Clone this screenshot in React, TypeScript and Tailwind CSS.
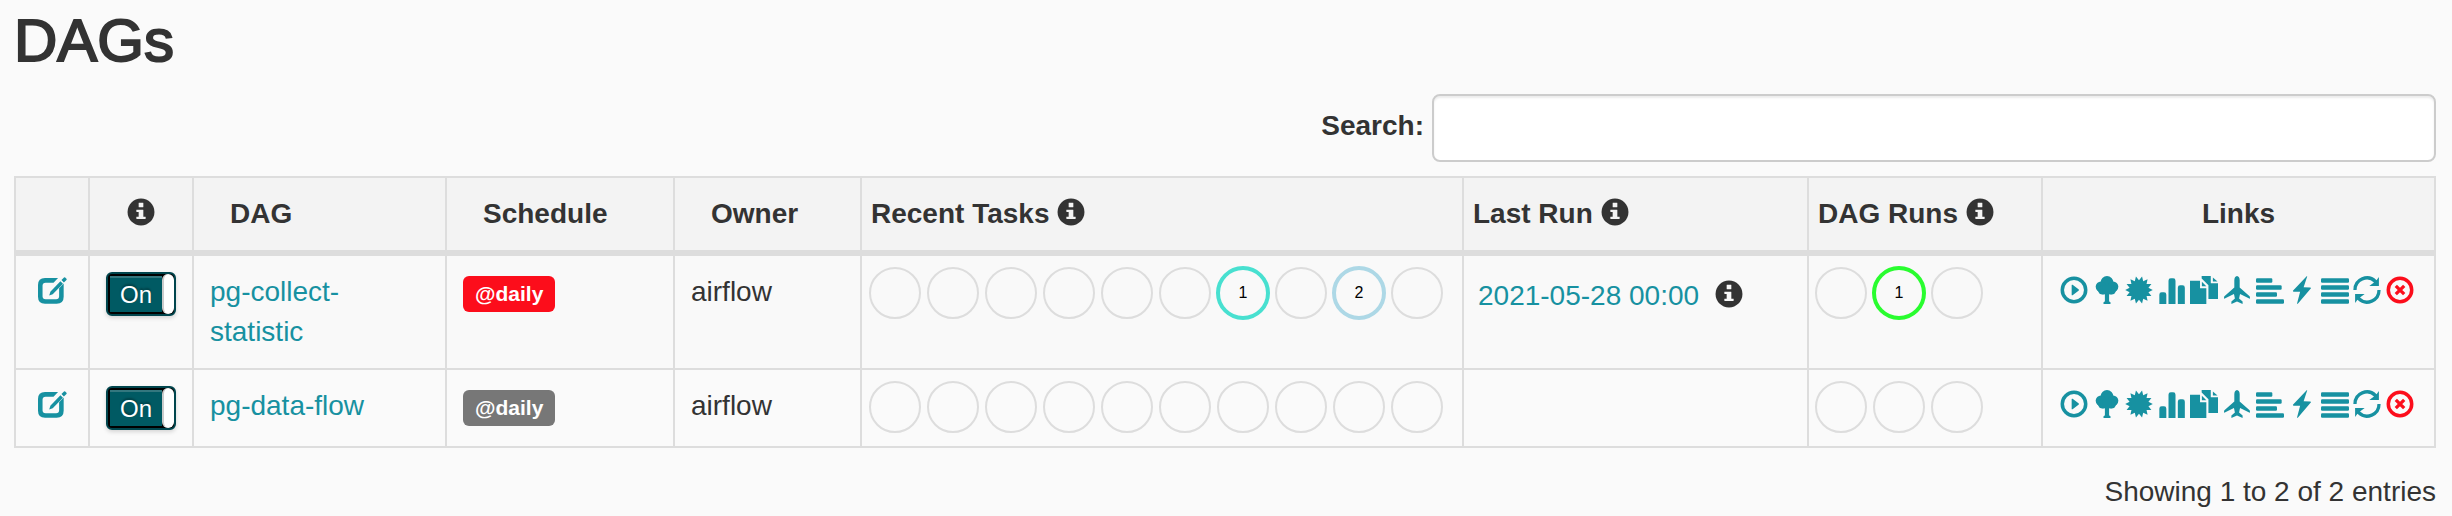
import { useState, type ReactNode } from "react";

type IconName =
  | "info" | "edit" | "play" | "tree" | "burst" | "stats" | "duplicate"
  | "plane" | "alignLeft" | "flash" | "alignJustify" | "refresh" | "remove";

const burstPoints = Array.from({ length: 28 }, (_, i) => {
  const angle = (i * Math.PI) / 14;
  const radius = i % 2 === 0 ? 590 : 415;
  return `${Math.round(600 + radius * Math.cos(angle))},${Math.round(600 + radius * Math.sin(angle))}`;
}).join(" ");

const refreshArrow = "M15 600A585 585 0 0 1 1010 180L1110 40V430H700L900 278A440 440 0 0 0 155 600Z";

const shapes: Record<IconName, ReactNode> = {
  info: (
    <path
      transform="translate(0 1200) scale(1 -1)"
      fillRule="evenodd"
      d="M600 1177q117 0 224 -45.5t184.5 -123t123 -184.5t45.5 -224t-45.5 -224t-123 -184.5t-184.5 -123t-224 -45.5t-224 45.5t-184.5 123t-123 184.5t-45.5 224t45.5 224t123 184.5t184.5 123t224 45.5zM675 1000h-150q-10 0 -17.5 -7.5t-7.5 -17.5v-150q0 -10 7.5 -17.5t17.5 -7.5h150q10 0 17.5 7.5t7.5 17.5v150q0 10 -7.5 17.5t-17.5 7.5zM675 700h-250q-10 0 -17.5 -7.5t-7.5 -17.5v-50q0 -10 7.5 -17.5t17.5 -7.5h75v-200h-75q-10 0 -17.5 -7.5t-7.5 -17.5v-50q0 -10 7.5 -17.5t17.5 -7.5h350q10 0 17.5 7.5t7.5 17.5v50q0 10 -7.5 17.5t-17.5 7.5h-75v275q0 10 -7.5 17.5t-17.5 7.5z"
    />
  ),
  edit: (
    <>
      <path d="M860 90H300Q0 90 0 390V890Q0 1190 300 1190H800Q1100 1190 1100 890V325L905 520V865Q905 995 775 995H325Q195 995 195 865V415Q195 285 325 285H665Z" />
      <path d="M480 835L530 670L960 220L1070 330L630 785Z" />
      <path d="M1005 170L1115 60Q1140 40 1165 65L1220 120Q1245 145 1220 170L1110 280Z" />
    </>
  ),
  play: (
    <>
      <circle cx="600" cy="600" r="502" fill="none" stroke="currentColor" strokeWidth="150" />
      <path d="M540 380l253 190q17 12 17 30t-17 30l-253 190q-16 12 -28 6.5t-12 -26.5v-400q0 -21 12 -26.5t28 6.5z" />
    </>
  ),
  tree: (
    <>
      <circle cx="600" cy="280" r="275" />
      <circle cx="340" cy="460" r="225" />
      <circle cx="860" cy="460" r="225" />
      <circle cx="410" cy="600" r="195" />
      <circle cx="790" cy="600" r="195" />
      <path d="M400 400H800V780H690V1060Q690 1120 750 1120V1200H450V1120Q510 1120 510 1060V780H400Z" />
    </>
  ),
  burst: <polygon points={burstPoints} />,
  stats: (
    <>
      <path d="M57 1200V800Q57 700 157 700H257Q357 700 357 800V1200Z" />
      <path d="M450 1200V200Q450 100 550 100H650Q750 100 750 200V1200Z" />
      <path d="M850 1200V500Q850 400 950 400H1050Q1150 400 1150 500V1200Z" />
    </>
  ),
  duplicate: (
    <>
      <path d="M0 200H430V520H700V1200H0Z" />
      <path d="M510 250L700 440H510Z" />
      <path d="M500 0H890V310H1200V990H790V400L500 110Z" />
      <path d="M980 60L1180 240H980Z" />
    </>
  ),
  plane: (
    <path d="M600 0Q490 20 485 180V490L60 870Q40 890 45 960L55 975L470 770L510 960L360 1090V1195L600 1090L840 1195V1090L690 960L730 770L1145 975L1155 960Q1160 890 1140 870L715 490V180Q710 20 600 0Z" />
  ),
  alignLeft: (
    <>
      <rect y="100" width="700" height="190" rx="50" />
      <rect y="400" width="1100" height="190" rx="50" />
      <rect y="700" width="900" height="190" rx="50" />
      <rect y="1000" width="1200" height="190" rx="50" />
    </>
  ),
  flash: <path d="M800 15L210 630Q205 670 250 672L520 680L385 1185H420L985 530Q990 490 945 488L670 480L825 15Z" />,
  alignJustify: (
    <>
      <rect y="100" width="1200" height="190" rx="50" />
      <rect y="400" width="1200" height="190" rx="50" />
      <rect y="700" width="1200" height="190" rx="50" />
      <rect y="1000" width="1200" height="190" rx="50" />
    </>
  ),
  refresh: (
    <>
      <path d={refreshArrow} />
      <path d={refreshArrow} transform="rotate(180 600 600)" />
    </>
  ),
  remove: (
    <>
      <circle cx="600" cy="600" r="502" fill="none" stroke="currentColor" strokeWidth="150" />
      <path d="M420 420L780 780M780 420L420 780" fill="none" stroke="currentColor" strokeWidth="140" />
    </>
  ),
};

function Icon({ name }: { name: IconName }) {
  return (
    <svg viewBox="0 0 1200 1200" fill="currentColor" aria-hidden="true" className="block size-7 shrink-0 overflow-visible">
      {shapes[name]}
    </svg>
  );
}

const actions: { icon: IconName; label: string }[] = [
  { icon: "play", label: "Trigger Dag" },
  { icon: "tree", label: "Tree View" },
  { icon: "burst", label: "Graph View" },
  { icon: "stats", label: "Tasks Duration" },
  { icon: "duplicate", label: "Task Tries" },
  { icon: "plane", label: "Landing Times" },
  { icon: "alignLeft", label: "Gantt View" },
  { icon: "flash", label: "Code View" },
  { icon: "alignJustify", label: "Logs" },
  { icon: "refresh", label: "Refresh" },
  { icon: "remove", label: "Delete Dag" },
];

type Ring = { count: number; tone: string } | null;

interface Dag {
  name: string;
  badge: string;
  row: string;
  tasks: Ring[];
  lastRun?: string;
  runs: Ring[];
}

const dags: Dag[] = [
  {
    name: "pg-collect-statistic",
    badge: "bg-[#fc0d1b]",
    row: "bg-[#f9f9f9]",
    tasks: [
      null, null, null, null, null, null,
      { count: 1, tone: "border-[#48e0d0]" },
      null,
      { count: 2, tone: "border-[#add8e6]" },
      null,
    ],
    lastRun: "2021-05-28 00:00",
    runs: [null, { count: 1, tone: "border-[#29fd2f]" }, null],
  },
  {
    name: "pg-data-flow",
    badge: "bg-[#777777]",
    row: "bg-[#fafafa]",
    tasks: Array<Ring>(10).fill(null),
    runs: [null, null, null],
  },
];

function Rings({ rings }: { rings: Ring[] }) {
  return (
    <div className="flex gap-1">
      {rings.map((ring, i) =>
        ring ? (
          <span
            key={i}
            className={`flex size-[54px] items-center justify-center rounded-full border-4 text-base text-black ${ring.tone}`}
          >
            {ring.count}
          </span>
        ) : (
          <span key={i} className="m-px size-[52px] rounded-full border-2 border-[#dddddd]" />
        ),
      )}
    </div>
  );
}

function Toggle({ name }: { name: string }) {
  const [on, setOn] = useState(true);
  return (
    <button
      type="button"
      role="switch"
      aria-checked={on}
      aria-label={`${name} enabled`}
      onClick={() => setOn(!on)}
      className={`flex h-11 w-[70px] overflow-hidden rounded-md border-2 border-[#00454d] bg-black text-2xl text-white shadow-[0_2px_4px_rgba(0,0,0,0.15)] ${on ? "" : "flex-row-reverse"}`}
    >
      <span className="my-[2px] ml-[2px] flex h-9 flex-1 items-center justify-center border-t-2 border-[#33777e] bg-[#005a63] [text-shadow:0_-2px_2px_rgba(0,0,0,0.3)]">
        {on ? "On" : "Off"}
      </span>
      <span className="h-10 w-3 rounded-md border-l-2 border-[#cccccc] bg-white" />
    </button>
  );
}

const th = "border-r-2 border-b-[6px] border-[#dddddd] bg-[#f3f3f3] py-4 text-left font-bold";
const td = "border-r-2 border-b-2 border-[#dddddd] align-top";
const link = "text-[#1791a1] hover:underline";

export default function App() {
  const [query, setQuery] = useState("");
  const rows = dags.filter((dag) => dag.name.includes(query));

  return (
    <main className="min-h-screen bg-[#fafafa] pt-2 pr-4 pb-1 pl-[14px] font-['Liberation_Sans',Arial,sans-serif] text-[28px] leading-[40px] text-[#333333]">
      <h1 className="mb-5 text-[60px] leading-[66px] [-webkit-text-stroke:2px_#333333]">DAGs</h1>

      <div className="mb-[14px] flex items-center justify-end gap-2">
        <label htmlFor="dag-search" className="pb-1 font-bold">Search:</label>
        <input
          id="dag-search"
          type="search"
          value={query}
          onChange={(e) => setQuery(e.target.value)}
          className="h-[68px] max-w-[1004px] min-w-0 flex-1 rounded-lg border-2 border-[#cccccc] bg-white px-6 shadow-[inset_0_2px_2px_rgba(0,0,0,0.075)] outline-none focus:border-[#66afe9]"
        />
      </div>

      <table className="w-full table-fixed border-separate border-spacing-0 border-t-2 border-l-2 border-[#dddddd]">
        <colgroup>
          <col className="w-[74px]" />
          <col className="w-[104px]" />
          <col />
          <col className="w-[228px]" />
          <col className="w-[187px]" />
          <col className="w-[602px]" />
          <col className="w-[345px]" />
          <col className="w-[234px]" />
          <col className="w-[393px]" />
        </colgroup>
        <thead>
          <tr>
            <th className={th} aria-label="Edit" />
            <th className={th} aria-label="Enabled">
              <div className="flex h-10 justify-center pt-1"><Icon name="info" /></div>
            </th>
            <th className={`${th} pl-9`}>DAG</th>
            <th className={`${th} pl-9`}>Schedule</th>
            <th className={`${th} pl-9`}>Owner</th>
            {["Recent Tasks", "Last Run", "DAG Runs"].map((title) => (
              <th key={title} className={`${th} pl-[9px]`}>
                <div className="flex gap-2">
                  {title}
                  <span className="pt-1"><Icon name="info" /></span>
                </div>
              </th>
            ))}
            <th className={th}><div className="text-center">Links</div></th>
          </tr>
        </thead>
        <tbody>
          {rows.map((dag) => (
            <tr key={dag.name} className={dag.row}>
              <td className={`${td} pt-5`}>
                <a href="#edit" aria-label={`Edit ${dag.name}`} className={`${link} flex justify-center`}>
                  <Icon name="edit" />
                </a>
              </td>
              <td className={`${td} p-4`}><Toggle name={dag.name} /></td>
              <td className={`${td} p-4`}><a href="#dag" className={link}>{dag.name}</a></td>
              <td className={`${td} px-4 pt-5`}>
                <a href="#schedule" className={`block h-9 w-fit rounded-md px-3 text-[21px] leading-[36px] font-bold text-white ${dag.badge}`}>
                  @daily
                </a>
              </td>
              <td className={`${td} p-4`}>airflow</td>
              <td className={`${td} pt-[10px] pl-[6px]`}><Rings rings={dag.tasks} /></td>
              <td className={`${td} pt-5 pl-[14px]`}>
                {dag.lastRun && (
                  <div className="flex gap-4">
                    <a href="#run" className={link}>{dag.lastRun}</a>
                    <span className="pt-1"><Icon name="info" /></span>
                  </div>
                )}
              </td>
              <td className={`${td} pt-[10px] pl-[5px]`}><Rings rings={dag.runs} /></td>
              <td className={`${td} pt-5 pr-5 pl-[17px]`}>
                <div className="flex justify-between">
                  {actions.map(({ icon, label }) => (
                    <a
                      key={icon}
                      href={`#${icon}`}
                      aria-label={label}
                      className={icon === "remove" ? "text-[#fc0d1b]" : "text-[#1791a1]"}
                    >
                      <Icon name={icon} />
                    </a>
                  ))}
                </div>
              </td>
            </tr>
          ))}
        </tbody>
      </table>

      <p className="mt-6 text-right">Showing 1 to 2 of 2 entries</p>
    </main>
  );
}
